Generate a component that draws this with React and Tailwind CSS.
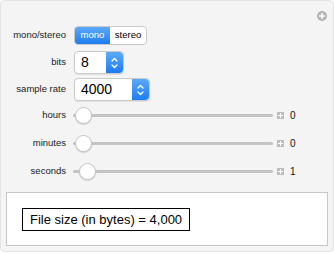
// Sound file size explorer panel
const font = { fontFamily: '"Liberation Sans", Arial, sans-serif' };

function Stepper() {
	return (
		<div className="flex items-center justify-center w-[17px] h-full rounded-r-[4px] bg-gradient-to-b from-[#5aa9fa] to-[#1b7cf2]">
			<svg width="9" height="14" viewBox="0 0 9 14" fill="none" stroke="white" strokeWidth="1.3" strokeLinecap="round" strokeLinejoin="round">
				<path d="M2 5 L4.5 2.5 L7 5" />
				<path d="M2 9 L4.5 11.5 L7 9" />
			</svg>
		</div>
	);
}

function Select({ value, width }) {
	return (
		<div
			className="flex items-stretch h-[23px] bg-white border border-[#c9c9c9] rounded-[4px] shadow-[0_1px_1px_rgba(0,0,0,0.08)]"
			style={{ width }}
		>
			<div className="flex-1 flex items-center pl-[6px] text-[14px] text-black">{value}</div>
			<Stepper />
		</div>
	);
}

function Slider({ label, value, offset }) {
	return (
		<div className="grid grid-cols-[65px_1fr] gap-x-[7px] h-[28px] items-center">
			<div className="text-right text-[9.5px] text-[#1a1a1a]">{label}</div>
			<div className="flex items-center">
				<div className="relative w-[200px] h-[17px]">
					<div className="absolute left-0 right-0 top-[7px] h-[3px] rounded-full bg-[#c3c3c3]" />
					<div
						className="absolute top-0 w-[17px] h-[17px] rounded-full bg-white border border-[#c4c4c4] shadow-[0_1px_1px_rgba(0,0,0,0.15)]"
						style={{ left: offset }}
					/>
				</div>
				<div className="ml-[4px] w-[7px] h-[7px] bg-[#bdbdbd] flex items-center justify-center">
					<svg width="5" height="5" viewBox="0 0 5 5" stroke="white" strokeWidth="1">
						<path d="M2.5 0 V5 M0 2.5 H5" />
					</svg>
				</div>
				<div className="ml-[6px] text-[10px] text-[#111]">{value}</div>
			</div>
		</div>
	);
}

export default function App() {
	return (
		<div className="w-[334px] h-[254px] bg-white" style={font}>
			<div className="relative w-[334px] h-[252px] bg-[#f4f4f4] border border-[#e3e3e3] rounded-[4px] flex flex-col">
				{/* Expand icon */}
				<div className="absolute top-[10px] right-[6px] w-[10px] h-[10px] rounded-full bg-[#b4b4b4] flex items-center justify-center">
					<svg width="6" height="6" viewBox="0 0 6 6" stroke="white" strokeWidth="1.6">
						<path d="M3 0 V6 M0 3 H6" />
					</svg>
				</div>

				{/* Controls */}
				<div className="pt-[25px] flex flex-col">
					<div className="grid grid-cols-[65px_1fr] gap-x-[8px] h-[19px] items-center">
						<div className="text-right text-[9.5px] text-[#1a1a1a]">mono/stereo</div>
						<div className="flex w-[73px] h-[19px] rounded-[4px] border border-[#c9c9c9] overflow-hidden text-[9.5px] bg-white">
							<div className="w-[35px] flex items-center justify-center text-white bg-gradient-to-b from-[#5aa9fa] to-[#1b7cf2]">mono</div>
							<div className="flex-1 flex items-center justify-center text-black">stereo</div>
						</div>
					</div>
					<div className="grid grid-cols-[65px_1fr] gap-x-[8px] h-[23px] mt-[6px] items-center">
						<div className="text-right text-[9.5px] text-[#1a1a1a]">bits</div>
						<Select value="8" width={50} />
					</div>
					<div className="grid grid-cols-[65px_1fr] gap-x-[8px] h-[23px] mt-[4px] items-center">
						<div className="text-right text-[9.5px] text-[#1a1a1a]">sample rate</div>
						<Select value="4000" width={76} />
					</div>
					<Slider label="hours" value="0" offset={2} />
					<Slider label="minutes" value="0" offset={2} />
					<Slider label="seconds" value="1" offset={6} />
				</div>

				{/* Output */}
				<div className="mt-[7px] mx-[5px] h-[54px] bg-white border border-[#c6c6c6] pt-[14px] pl-[15px]">
					<div className="inline-flex items-center h-[23px] w-[168px] border border-black pl-[7px] text-[13px] text-black">
						File size (in bytes) = 4,000
					</div>
				</div>
			</div>
		</div>
	);
}
